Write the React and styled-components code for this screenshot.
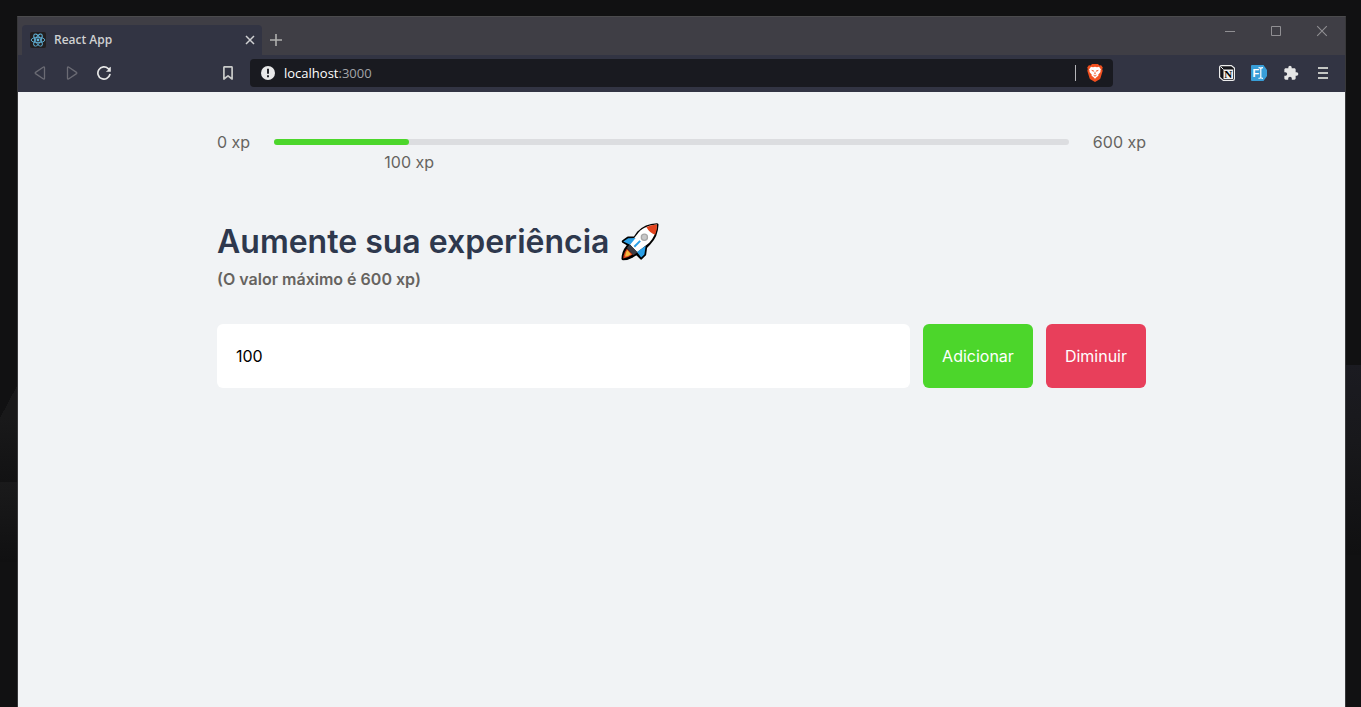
import React, { useState } from 'react';
import styled, { createGlobalStyle } from 'styled-components';
import { MdExtension } from 'react-icons/md';

const MAX_XP = 600;

const GlobalStyle = createGlobalStyle`
  * { box-sizing: border-box; }
  body {
    margin: 0;
    background:
      linear-gradient(to bottom right, #111112 50%, #19191a 50%) 0 386px / 17px 32px no-repeat,
      linear-gradient(#19191a, #121213) 0 418px / 17px 64px no-repeat,
      linear-gradient(#1a1a1b, #101011) 0 482px / 17px 80px no-repeat,
      linear-gradient(#1b1b21, #18181b 40%, #101011) 100% 365px / 15px 190px no-repeat,
      #111112;
    font-family: Inter, "Liberation Sans", sans-serif;
    font-size: 16px;
  }
  button, input { font: inherit; }
`;

const BrowserWindow = styled.div`
  display: flex;
  flex-direction: column;
  min-height: calc(100vh - 16px);
  margin: 16px 15px 0 17px;
  border: 1px solid #38383a;
  border-top-color: #4b4b4d;
  border-bottom: 0;
  background: #f1f3f5;
`;

const TabStrip = styled.header`
  display: flex;
  align-items: flex-end;
  height: 38px;
  padding-left: 4px;
  background: #3f3e45;
  font-family: "Open Sans", "Noto Sans", sans-serif;
`;

const Tab = styled.div`
  display: flex;
  align-items: center;
  width: 240px;
  height: 30px;
  padding: 0 4px 0 8px;
  border-radius: 4px 4px 0 0;
  background: #323443;
`;

const TabTitle = styled.button`
  display: flex;
  flex: 1;
  align-items: center;
  gap: 8px;
  padding: 0;
  border: 0;
  background: none;
  color: #d0d1d2;
  font-size: 12px;
  font-weight: 600;
  line-height: 16px;
  text-align: left;
`;

const IconButton = styled.button`
  display: flex;
  align-items: center;
  justify-content: center;
  flex: none;
  width: ${({ $width = 32 }) => $width}px;
  height: ${({ $height = 28 }) => $height}px;
  padding: 0;
  border: 0;
  background: none;
  color: ${({ $color = '#e6e6e6' }) => $color};
`;

const WindowControls = styled.div`
  display: flex;
  align-self: flex-start;
  margin-left: auto;
`;

const Toolbar = styled.nav`
  display: flex;
  align-items: center;
  height: 37px;
  padding: 0 6px 1px;
  background: #323443;
`;

const ToolGroup = styled.div`
  display: flex;
`;

const AddressArea = styled.div`
  display: flex;
  flex: 1;
  align-items: center;
  gap: 6px;
  margin: 0 98px 0 92px;
`;

const AddressBar = styled.div`
  display: flex;
  flex: 1;
  align-items: center;
  height: 28px;
  padding: 0 2px 0 11px;
  border-radius: 4px;
  background: #191a20;
`;

const Address = styled.button`
  display: flex;
  flex: 1;
  align-items: center;
  padding: 0;
  border: 0;
  background: none;
  color: #fff;
  font-family: "Open Sans", "Noto Sans", sans-serif;
  font-size: 13px;
  text-align: left;

  svg { margin-right: 9px; }
`;

const Port = styled.span`
  color: #a3a4a8;
`;

const Divider = styled.span`
  width: 1px;
  height: 16px;
  margin-right: 3px;
  background: #b5b5b8;
`;

const Page = styled.main`
  padding: 40px 199px;
`;

const XpBar = styled.section`
  display: flex;
  align-items: center;
  gap: 24px;
  height: 20px;
  color: #666360;
`;

const Track = styled.div`
  position: relative;
  flex: 1;
  height: 6px;
  border-radius: 4px;
  background: #dcdde0;
`;

const Fill = styled.div`
  height: 6px;
  border-radius: 4px;
  background: #4cd62b;
`;

const CurrentXp = styled.span`
  position: absolute;
  top: 13px;
  line-height: 20px;
  white-space: nowrap;
  transform: translateX(-50%);
`;

const Title = styled.h1`
  display: flex;
  align-items: center;
  gap: 12px;
  margin: 68px 0 0;
  color: #2e384d;
  font-size: 32px;
  font-weight: 600;
  line-height: 44px;
`;

const Hint = styled.p`
  margin: 3px 0 33px;
  color: #666360;
  font-weight: 600;
  line-height: 24px;
`;

const XpForm = styled.form`
  display: flex;
  gap: 13px;
`;

const XpInput = styled.input`
  flex: 1;
  min-width: 0;
  height: 64px;
  padding: 0 19px;
  border: 0;
  border-radius: 6px;
  background: #fff;
  color: #000;
  outline: none;
`;

const ActionButton = styled.button`
  height: 64px;
  padding: 0 19px;
  border: 0;
  border-radius: 6px;
  background: ${({ $tone }) => $tone};
  color: #fff;
`;

const ReactIcon = () => (
  <svg width="16" height="16" viewBox="0 0 16 16" fill="none" stroke="#62b5dc">
    <rect width="16" height="16" rx="2" fill="#231f20" stroke="none" />
    <g strokeWidth=".9">
      <ellipse cx="8" cy="8" rx="6.8" ry="2.700" />
      <ellipse cx="8" cy="8" rx="6.8" ry="2.700" transform="rotate(60 8 8)" />
      <ellipse cx="8" cy="8" rx="6.8" ry="2.700" transform="rotate(120 8 8)" />
    </g>
    <circle cx="8" cy="8" r="1.400" fill="#62b5dc" stroke="none" />
  </svg>
);

const CrossIcon = ({ size, width }) => (
  <svg width={size} height={size} viewBox="0 0 10 10" stroke="currentColor" strokeWidth={width}>
    <path d="M1 1l8 8M9 1L1 9" />
  </svg>
);

const PlusIcon = () => (
  <svg width="12" height="12" viewBox="0 0 12 12" stroke="currentColor" strokeWidth="1.600">
    <path d="M6 0v12M0 6h12" />
  </svg>
);

const MinimizeIcon = () => (
  <svg width="10" height="10" viewBox="0 0 10 10" stroke="currentColor"><path d="M0 5.500h10" /></svg>
);

const MaximizeIcon = () => (
  <svg width="10" height="10" viewBox="0 0 10 10" fill="none" stroke="currentColor"><path d="M.5.5h9v9h-9z" /></svg>
);

const BackIcon = () => (
  <svg width="12" height="14" viewBox="0 0 12 14" fill="none" stroke="currentColor" strokeWidth="1.300" strokeLinejoin="round">
    <path d="M9.500 1L1.500 6.400q-.8.6 0 1.200L9.500 13q1 .4 1-.7V1.700Q10.500.6 9.500 1z" />
  </svg>
);

const ForwardIcon = () => (
  <svg width="12" height="14" viewBox="0 0 12 14" fill="none" stroke="currentColor" strokeWidth="1.300" strokeLinejoin="round">
    <path d="M2.500 1l8 5.400q.8.6 0 1.200l-8 5.400q-1 .4-1-.7V1.700Q1.500.6 2.500 1z" />
  </svg>
);

const ReloadIcon = () => (
  <svg width="14" height="14" viewBox="0 0 14 14" fill="none" stroke="currentColor" strokeWidth="1.700">
    <path d="M12.900 8.500A6.100 6.100 0 1 1 11.200 2.600" strokeLinecap="round" />
    <path d="M13.800.8v5H8.800l1.900-1.600.8-2z" fill="currentColor" stroke="none" />
  </svg>
);

const BookmarkIcon = () => (
  <svg width="10" height="14" viewBox="0 0 10 14" fill="none" stroke="currentColor" strokeWidth="1.700" strokeLinejoin="round">
    <path d="M.9 1.500q0-.7.7-.7h6.800q.7 0 .7.700V13L5 9.900.9 13z" />
  </svg>
);

const WarningIcon = () => (
  <svg width="14" height="14" viewBox="0 0 14 14">
    <circle cx="7" cy="7" r="7" fill="#e8e8e9" />
    <path d="M7 2.800v5M7 9.300v1.900" stroke="#191a20" strokeWidth="1.900" />
  </svg>
);

const BraveIcon = () => (
  <svg width="16" height="18" viewBox="0 0 16 18">
    <path d="M5 0h6l1.300 1.400 1.800-.2 1.700 2.300-.6 1.600.5 1.600-2.200 7.300q-.3 1-1.200 1.600L8 18l-4.300-2.400q-.9-.6-1.200-1.600L.3 6.700l.5-1.600L.2 3.500l1.700-2.300 1.800.2z" fill="#f1501f" />
    <path d="M4 2.800l2 .5 2-.5 2 .5 2-.5 2 2.600-.6 1.400.1 1.200-2.300 2.800.2 1.200-1.200.6L8 14.800l-2.200-2.200-1.200-.6.2-1.200L2.500 8l.1-1.200L2 5.400z" fill="#fff" />
    <path d="M4 5.800l2.900.8-.5 1.500zM12 5.800l-2.900.8.5 1.500zM8 7l.7 2.700-.7.700-.7-.7z" fill="#f1501f" />
    <path d="M5.700 10.500L8 11.600l2.300-1.100L8 12.700z" fill="#f1501f" />
  </svg>
);

const NotionIcon = () => (
  <svg width="16" height="16" viewBox="0 0 16 16">
    <path d="M2.500.6h9.700L15.400 3v10.800q0 1.600-1.600 1.600H4.200L.6 12.200V2.500Q.6.600 2.500.6z" fill="#15151a" stroke="#ececec" strokeWidth="1.200" strokeLinejoin="round" />
    <path d="M4.500 4.500h9.500v9.500H4.500z" fill="#f1f1f1" />
    <path d="M1.600 1.600L4.500 4.500" stroke="#ececec" />
    <text x="9.200" y="13" textAnchor="middle" fontFamily="Liberation Serif, serif" fontWeight="bold" fontSize="11">N</text>
  </svg>
);

const FontIcon = () => (
  <svg width="16" height="16" viewBox="0 0 16 16">
    <path d="M1 0h11.500L16 5v6l-3.500 5H1q-1 0-1-1V1q0-1 1-1z" fill="#389ed8" />
    <text x="1.500" y="12" fill="#fff" fontFamily="Liberation Sans, sans-serif" fontWeight="bold" fontSize="11">F</text>
    <path d="M7.500 2.600q2 0 2.300 1 .3-1 2.200-1M9.800 3.500v9M7.500 13.400q2 0 2.300-1 .3 1 2.200 1" fill="none" stroke="#fff" strokeWidth="1.200" />
  </svg>
);

const MenuIcon = () => (
  <svg width="10" height="12" viewBox="0 0 10 12" stroke="currentColor" strokeWidth="2">
    <path d="M0 1h10M0 6h10M0 11h10" />
  </svg>
);

const Rocket = () => (
  <svg width="38" height="38" viewBox="33 36 115 117" role="img" aria-label="foguete">
    <path
      d="M143 41C122 42 100 50 86 65L75 81 54 82 39 93 56 103 46 117Q38 131 38 146 53 146 67 138L80 130 94 144 105 133 108 111 119 99Q142 75 143 41z"
      fill="#000" stroke="#000" strokeWidth="9" strokeLinejoin="round"
    />
    <path d="M143 41C122 42 100 50 86 65L58 101 82 126 119 97Q140 75 143 41z" fill="#fff" />
    <path d="M143 41Q126 42 110 48 119 65 137 72 143 58 143 41z" fill="#e2431d" />
    <path d="M39 93L54 83 77 82 60 103zM81 125L108 106 104 133 94 142z" fill="#2a9fe6" />
    <path d="M73 109L91 91" stroke="#2a9fe6" strokeWidth="6" />
    <path d="M58 103L83 126 70 135 50 113z" fill="#3d3c43" />
    <path d="M50 115L68 133Q54 143 39 145 39 129 50 115z" fill="#d8401d" />
    <path d="M51 119L63 132Q54 138 45 140 45 128 51 119z" fill="#f5b83c" />
    <circle cx="104" cy="80" r="9.500" fill="#c8c8c8" stroke="#a8a8a8" strokeWidth="4" />
  </svg>
);

export default function App() {
  const [xp, setXp] = useState(100);
  const [amount, setAmount] = useState('100');
  const progress = Math.ceil((xp / MAX_XP) * 100);

  const change = (sign) => {
    setXp((current) => Math.min(MAX_XP, Math.max(0, current + sign * (Number(amount) || 0))));
  };

  return (
    <>
      <GlobalStyle />
      <BrowserWindow>
        <TabStrip>
          <Tab>
            <TabTitle><ReactIcon />React App</TabTitle>
            <IconButton $width={16} $color="#cfd0d2" aria-label="Close tab"><CrossIcon size={10} width={1.5} /></IconButton>
          </Tab>
          <IconButton $width={28} $height={30} $color="#b0b0ae" aria-label="New tab"><PlusIcon /></IconButton>
          <WindowControls>
            <IconButton $width={46} $color="#908f93" aria-label="Minimize"><MinimizeIcon /></IconButton>
            <IconButton $width={46} $color="#908f93" aria-label="Maximize"><MaximizeIcon /></IconButton>
            <IconButton $width={46} $color="#908f93" aria-label="Close"><CrossIcon size={12} width={0.9} /></IconButton>
          </WindowControls>
        </TabStrip>
        <Toolbar>
          <ToolGroup>
            <IconButton $color="#6b6b74" aria-label="Back"><BackIcon /></IconButton>
            <IconButton $color="#6b6b74" aria-label="Forward"><ForwardIcon /></IconButton>
            <IconButton aria-label="Reload"><ReloadIcon /></IconButton>
          </ToolGroup>
          <AddressArea>
            <IconButton $color="#c9cac9" aria-label="Bookmark"><BookmarkIcon /></IconButton>
            <AddressBar>
              <Address><WarningIcon />localhost<Port>:3000</Port></Address>
              <Divider />
              <IconButton aria-label="Brave Shields"><BraveIcon /></IconButton>
            </AddressBar>
          </AddressArea>
          <ToolGroup>
            <IconButton aria-label="Notion"><NotionIcon /></IconButton>
            <IconButton aria-label="Fonts"><FontIcon /></IconButton>
            <IconButton aria-label="Extensions"><MdExtension size={16} /></IconButton>
            <IconButton $color="#c4c6c3" aria-label="Menu"><MenuIcon /></IconButton>
          </ToolGroup>
        </Toolbar>
        <Page>
          <XpBar>
            <span>0 xp</span>
            <Track>
              <Fill style={{ width: `${progress}%` }} />
              <CurrentXp style={{ left: `${progress}%` }}>{xp} xp</CurrentXp>
            </Track>
            <span>{MAX_XP} xp</span>
          </XpBar>
          <Title>Aumente sua experiência <Rocket /></Title>
          <Hint>(O valor máximo é {MAX_XP} xp)</Hint>
          <XpForm onSubmit={(event) => event.preventDefault()}>
            <XpInput aria-label="Experiência" value={amount} onChange={(event) => setAmount(event.target.value)} />
            <ActionButton type="button" $tone="#4cd62b" onClick={() => change(1)}>Adicionar</ActionButton>
            <ActionButton type="button" $tone="#e83f5b" onClick={() => change(-1)}>Diminuir</ActionButton>
          </XpForm>
        </Page>
      </BrowserWindow>
    </>
  );
}
